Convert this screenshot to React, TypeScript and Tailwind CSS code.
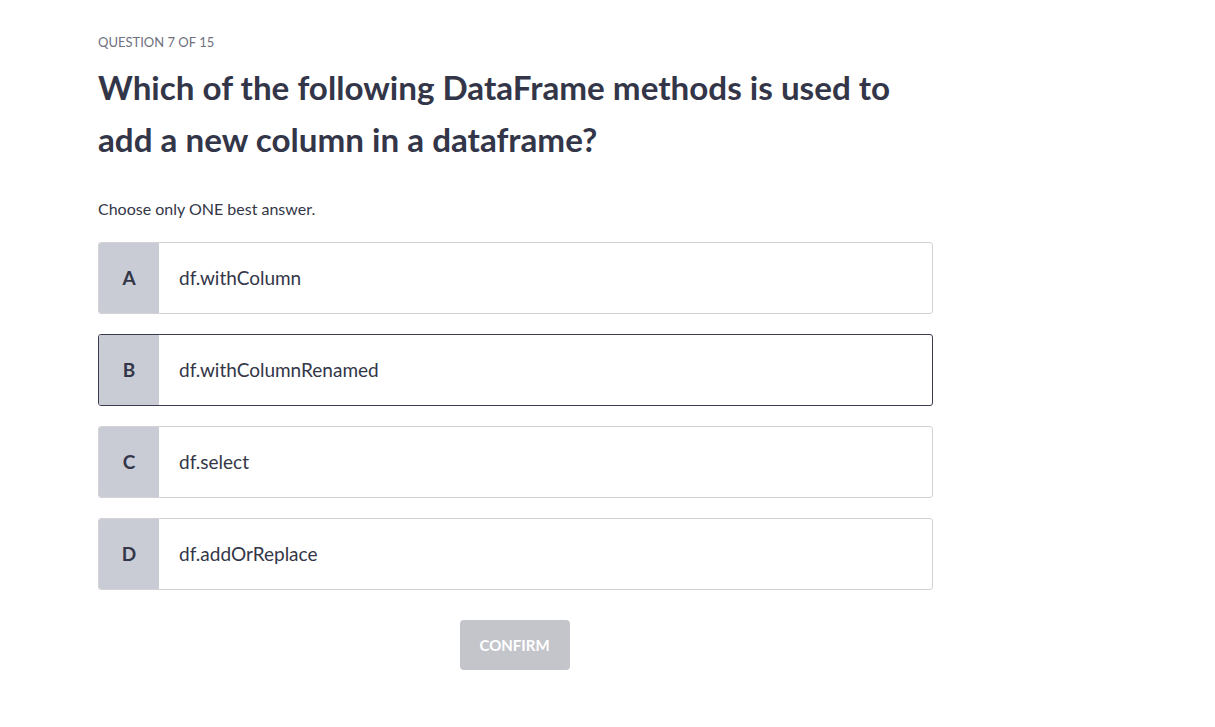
import React from 'react';

const options = [
  { key: 'A', label: 'df.withColumn' },
  { key: 'B', label: 'df.withColumnRenamed' },
  { key: 'C', label: 'df.select' },
  { key: 'D', label: 'df.addOrReplace' },
];

const App: React.FC = () => {
  const selected = 'B';

  return (
    <div className="min-h-screen bg-white font-['Lato','Noto_Sans',sans-serif] text-[#333648]">
      <div className="w-[835px] ml-[98px] pt-[33px]">
        <div className="text-[13px] leading-[18px] text-[#6f7180] uppercase">Question 7 of 15</div>
        <h1 className="mt-[10px] text-[33.2px] leading-[52px] font-bold w-[820px]">
          Which of the following DataFrame methods is used to add a new column in a dataframe?
        </h1>
        <p className="mt-[33px] text-[16px] leading-[22px] text-[#333648]">Choose only ONE best answer.</p>

        <div className="mt-[22px] flex flex-col gap-[20px]">
          {options.map((opt) => (
            <button
              key={opt.key}
              className={`flex h-[72px] w-full text-left rounded-[3px] overflow-hidden border bg-white ${
                selected === opt.key ? 'border-[#3a3d4f]' : 'border-[#d2d3d9]'
              }`}
            >
              <span className="w-[60px] shrink-0 bg-[#c9ccd5] flex items-center justify-center text-[19px] font-bold text-[#333648]">
                {opt.key}
              </span>
              <span className="flex items-center pl-[20px] text-[19px] text-[#333648]">{opt.label}</span>
            </button>
          ))}
        </div>

        <div className="mt-[30px] flex justify-center">
          <button className="w-[110px] h-[50px] -ml-[2px] rounded-[4px] bg-[#c4c5cb] text-white text-[15px] font-bold uppercase">
            Confirm
          </button>
        </div>
      </div>
    </div>
  );
};

export default App;
